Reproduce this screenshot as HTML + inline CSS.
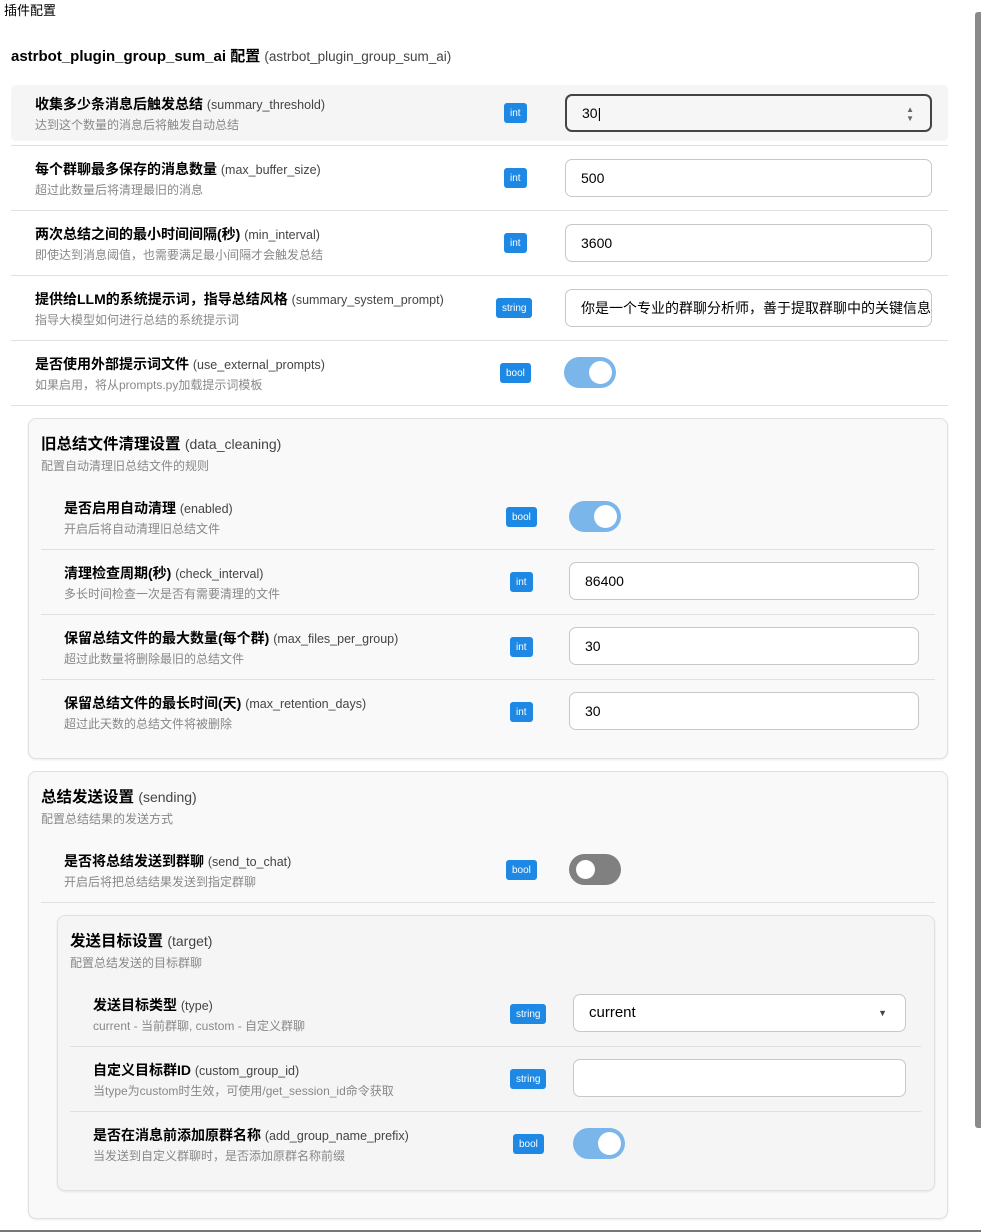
<!DOCTYPE html>
<html><head><meta charset="utf-8"><style>
*{box-sizing:border-box;margin:0;padding:0}
body{width:981px;height:1232px;background:#fff;font-family:"Liberation Sans","Noto Sans CJK SC",sans-serif;color:#000;position:relative;overflow:hidden}
.a{position:absolute}
.t{font-size:14px;font-weight:bold;white-space:nowrap}
.t span{font-weight:normal;font-size:12.5px;color:#444}
.d{font-size:12px;color:#888;white-space:nowrap}
.b{position:absolute;background:#1e88e5;color:#fff;font-size:10px;border-radius:3px;height:20px;display:flex;align-items:center;justify-content:center;padding:0 6px}
.in{position:absolute;border:1px solid #c8c8c8;border-radius:7px;height:38px;background:#fff;font-size:14px;line-height:36px;padding-left:15px;white-space:nowrap;overflow:hidden}
.hr{position:absolute;height:1px;background:#e0e0e0}
.tg{position:absolute;width:52px;height:31px;border-radius:16px;background:#7ab6ea}
.tg::after{content:"";position:absolute;right:4px;top:4px;width:23px;height:23px;border-radius:50%;background:#fff}
.tg.off{background:#808080}
.tg.off::after{right:auto;left:7px;top:6px;width:19px;height:19px}
.card{position:absolute;border:1px solid #e0e0e0;border-radius:8px;background:#f9f9f9;box-shadow:0 1px 2px rgba(0,0,0,.08)}
.ch{font-size:15.5px}
.ch span{font-size:14px}
</style></head><body>
<div class="a" style="left:4px;top:0;font-size:13px">插件配置</div>
<div class="a" style="left:11px;top:45px;font-size:15px;font-weight:bold">astrbot_plugin_group_sum_ai 配置 <span style="font-weight:normal;font-size:13.5px;color:#444">(astrbot_plugin_group_sum_ai)</span></div>

<div class="a" style="left:11px;top:85px;width:937px;height:56px;background:#f5f5f5;border-radius:5px"></div>
<div class="a t" style="left:35px;top:94px">收集多少条消息后触发总结 <span>(summary_threshold)</span></div>
<div class="a d" style="left:35px;top:116px">达到这个数量的消息后将触发自动总结</div>
<div class="b" style="left:504px;top:103px">int</div>
<div class="in" style="left:565px;top:94px;width:367px;border:2px solid #444;background:#f6f6f6;line-height:34px">30<span style="font-weight:100">|</span><span style="position:absolute;right:16px;top:0;font-size:8px;color:#666;line-height:9px;padding-top:9px">▲<br>▼</span></div>
<div class="hr" style="left:11px;top:145px;width:937px"></div>

<div class="a t" style="left:35px;top:159px">每个群聊最多保存的消息数量 <span>(max_buffer_size)</span></div>
<div class="a d" style="left:35px;top:181px">超过此数量后将清理最旧的消息</div>
<div class="b" style="left:504px;top:168px">int</div>
<div class="in" style="left:565px;top:159px;width:367px">500</div>
<div class="hr" style="left:11px;top:210px;width:937px"></div>

<div class="a t" style="left:35px;top:224px">两次总结之间的最小时间间隔(秒) <span>(min_interval)</span></div>
<div class="a d" style="left:35px;top:246px">即使达到消息阈值，也需要满足最小间隔才会触发总结</div>
<div class="b" style="left:504px;top:233px">int</div>
<div class="in" style="left:565px;top:224px;width:367px">3600</div>
<div class="hr" style="left:11px;top:275px;width:937px"></div>

<div class="a t" style="left:35px;top:289px">提供给LLM的系统提示词，指导总结风格 <span>(summary_system_prompt)</span></div>
<div class="a d" style="left:35px;top:311px">指导大模型如何进行总结的系统提示词</div>
<div class="b" style="left:496px;top:298px">string</div>
<div class="in" style="left:565px;top:289px;width:367px;padding-right:15px">你是一个专业的群聊分析师，善于提取群聊中的关键信息</div>
<div class="hr" style="left:11px;top:340px;width:937px"></div>

<div class="a t" style="left:35px;top:354px">是否使用外部提示词文件 <span>(use_external_prompts)</span></div>
<div class="a d" style="left:35px;top:376px">如果启用，将从prompts.py加载提示词模板</div>
<div class="b" style="left:500px;top:363px">bool</div>
<div class="tg" style="left:564px;top:357px"></div>
<div class="hr" style="left:11px;top:405px;width:937px"></div>

<div class="card" style="left:28px;top:418px;width:920px;height:341px"></div>
<div class="a t ch" style="left:41px;top:432px">旧总结文件清理设置 <span>(data_cleaning)</span></div>
<div class="a d" style="left:41px;top:457px">配置自动清理旧总结文件的规则</div>

<div class="a t" style="left:64px;top:498px">是否启用自动清理 <span>(enabled)</span></div>
<div class="a d" style="left:64px;top:520px">开启后将自动清理旧总结文件</div>
<div class="b" style="left:506px;top:507px">bool</div>
<div class="tg" style="left:569px;top:501px"></div>
<div class="hr" style="left:41px;top:549px;width:894px"></div>

<div class="a t" style="left:64px;top:563px">清理检查周期(秒) <span>(check_interval)</span></div>
<div class="a d" style="left:64px;top:585px">多长时间检查一次是否有需要清理的文件</div>
<div class="b" style="left:510px;top:572px">int</div>
<div class="in" style="left:569px;top:562px;width:350px">86400</div>
<div class="hr" style="left:41px;top:614px;width:894px"></div>

<div class="a t" style="left:64px;top:628px">保留总结文件的最大数量(每个群) <span>(max_files_per_group)</span></div>
<div class="a d" style="left:64px;top:650px">超过此数量将删除最旧的总结文件</div>
<div class="b" style="left:510px;top:637px">int</div>
<div class="in" style="left:569px;top:627px;width:350px">30</div>
<div class="hr" style="left:41px;top:679px;width:894px"></div>

<div class="a t" style="left:64px;top:693px">保留总结文件的最长时间(天) <span>(max_retention_days)</span></div>
<div class="a d" style="left:64px;top:715px">超过此天数的总结文件将被删除</div>
<div class="b" style="left:510px;top:702px">int</div>
<div class="in" style="left:569px;top:692px;width:350px">30</div>

<div class="card" style="left:28px;top:771px;width:920px;height:448px"></div>
<div class="a t ch" style="left:41px;top:785px">总结发送设置 <span>(sending)</span></div>
<div class="a d" style="left:41px;top:810px">配置总结结果的发送方式</div>
<div class="a t" style="left:64px;top:851px">是否将总结发送到群聊 <span>(send_to_chat)</span></div>
<div class="a d" style="left:64px;top:873px">开启后将把总结结果发送到指定群聊</div>
<div class="b" style="left:506px;top:860px">bool</div>
<div class="tg off" style="left:569px;top:854px"></div>
<div class="hr" style="left:41px;top:902px;width:894px"></div>

<div class="card" style="left:57px;top:915px;width:878px;height:276px;background:#f5f5f5"></div>
<div class="a t ch" style="left:70px;top:929px">发送目标设置 <span>(target)</span></div>
<div class="a d" style="left:70px;top:954px">配置总结发送的目标群聊</div>

<div class="a t" style="left:93px;top:995px">发送目标类型 <span>(type)</span></div>
<div class="a d" style="left:93px;top:1017px">current - 当前群聊, custom - 自定义群聊</div>
<div class="b" style="left:510px;top:1004px">string</div>
<div class="in" style="left:573px;top:994px;width:333px;font-size:15px">current<span style="position:absolute;right:18px;top:0;font-size:9px;color:#444">▼</span></div>
<div class="hr" style="left:70px;top:1046px;width:851px"></div>

<div class="a t" style="left:93px;top:1060px">自定义目标群ID <span>(custom_group_id)</span></div>
<div class="a d" style="left:93px;top:1082px">当type为custom时生效，可使用/get_session_id命令获取</div>
<div class="b" style="left:510px;top:1069px">string</div>
<div class="in" style="left:573px;top:1059px;width:333px"></div>
<div class="hr" style="left:70px;top:1111px;width:851px"></div>

<div class="a t" style="left:93px;top:1125px">是否在消息前添加原群名称 <span>(add_group_name_prefix)</span></div>
<div class="a d" style="left:93px;top:1147px">当发送到自定义群聊时，是否添加原群名称前缀</div>
<div class="b" style="left:513px;top:1134px">bool</div>
<div class="tg" style="left:573px;top:1128px"></div>

<div class="a" style="left:975px;top:12px;width:6px;height:1116px;background:#8a8a8a;border-radius:3px 0 0 3px"></div>
<div class="a" style="left:0;top:1230px;width:981px;height:2px;background:#777"></div>
</body></html>
